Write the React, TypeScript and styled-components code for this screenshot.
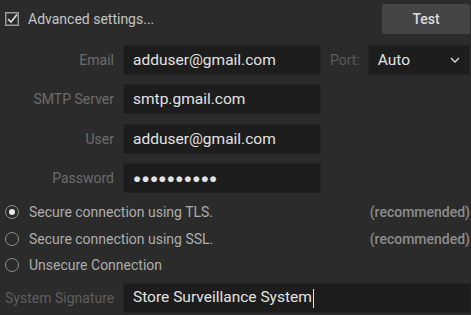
import styled, { createGlobalStyle } from 'styled-components';

const GlobalStyle = createGlobalStyle`
	html, body {
		margin: 0;
		padding: 0;
		background: #2b2b2b;
	}
	body {
		font-family: Roboto, 'Liberation Sans', sans-serif;
		overflow: hidden;
	}
`;

const Page = styled.div`
	width: 471px;
	height: 315px;
	background: #2b2b2b;
	box-sizing: border-box;
	padding: 4px 1px 0 5px;
	display: flex;
	flex-direction: column;
`;

const TopBar = styled.div`
	display: flex;
	align-items: center;
	justify-content: space-between;
	height: 30px;
`;

const CheckLabel = styled.label`
	display: flex;
	align-items: center;
	gap: 9px;
	color: #c4c4c4;
	font-size: 14px;
`;

const TestButton = styled.button`
	width: 88px;
	height: 30px;
	background: #454545;
	border: none;
	border-radius: 2px;
	color: #dcdcdc;
	font-family: inherit;
	font-size: 14px;
	font-weight: 500;
`;

const FormRows = styled.div`
	display: flex;
	flex-direction: column;
	gap: 9.5px;
	margin-top: 10.5px;
`;

const Row = styled.div`
	display: flex;
	align-items: center;
	height: 30px;
`;

const Label = styled.span<{ $dim?: boolean }>`
	width: 109px;
	text-align: right;
	color: ${(p) => (p.$dim ? '#5e5e5e' : '#6c6c6c')};
	font-size: 14px;
	padding-right: 9px;
	flex-shrink: 0;
	white-space: nowrap;
`;

const Field = styled.div<{ $width?: number; $grow?: boolean }>`
	width: ${(p) => (p.$width ? `${p.$width}px` : 'auto')};
	flex: ${(p) => (p.$grow ? 1 : 'none')};
	height: 30px;
	box-sizing: border-box;
	background: #1d1d1d;
	border-radius: 2px;
	box-shadow: inset 0 0 0 1px #242424;
	display: flex;
	align-items: center;
	justify-content: space-between;
	padding: 0 10px;
	color: #e2e2e2;
	font-size: 15.5px;
`;

const PortLabel = styled.span`
	color: #5c5c5c;
	font-size: 14px;
	margin: 0 8px 0 9px;
`;

const Dots = styled.span`
	letter-spacing: 0.3px;
	font-size: 13.5px;
`;

const Caret = styled.span`
	width: 1px;
	height: 19px;
	background: #e2e2e2;
	display: inline-block;
	vertical-align: middle;
	margin-left: 1px;
`;

const RadioList = styled.div`
	display: flex;
	flex-direction: column;
	margin-top: 6px;
`;

const RadioRow = styled.div`
	display: flex;
	align-items: center;
	height: 26.5px;
`;

const RadioCircle = styled.span<{ $checked?: boolean }>`
	width: 14px;
	height: 14px;
	box-sizing: border-box;
	border-radius: 50%;
	border: 1.5px solid #8c8c8c;
	display: flex;
	align-items: center;
	justify-content: center;
	margin-right: 10px;
	flex-shrink: 0;
	&::after {
		content: '';
		width: 6px;
		height: 6px;
		border-radius: 50%;
		background: ${(p) => (p.$checked ? '#e8e8e8' : 'transparent')};
	}
`;

const RadioText = styled.span`
	color: #adadad;
	font-size: 14px;
	flex: 1;
`;

const Hint = styled.span`
	color: #8b8b8b;
	font-size: 14px;
	font-weight: 500;
`;

const SignatureRow = styled.div`
	display: flex;
	align-items: center;
	height: 31px;
	margin-top: 4px;
	margin-right: -1px;
`;

function CheckIcon() {
	return (
		<svg width="14" height="14" viewBox="0 0 14 14">
			<rect x="0.75" y="0.75" width="12.5" height="12.5" fill="none" stroke="#9a9a9a" strokeWidth="1.5" />
			<path d="M3 7 L6 10 L12 2.5" fill="none" stroke="#e0e0e0" strokeWidth="1.6" />
		</svg>
	);
}

function ChevronIcon() {
	return (
		<svg width="10" height="6" viewBox="0 0 10 6">
			<path d="M1 1 L5 5 L9 1" fill="none" stroke="#d0d0d0" strokeWidth="1.5" />
		</svg>
	);
}

const radios = [
	{ text: 'Secure connection using TLS.', hint: '(recommended)', checked: true },
	{ text: 'Secure connection using SSL.', hint: '(recommended)', checked: false },
	{ text: 'Unsecure Connection', hint: '', checked: false },
];

export default function App() {
	return (
		<>
			<GlobalStyle />
			<Page>
				<TopBar>
					<CheckLabel>
						<CheckIcon />
						Advanced settings...
					</CheckLabel>
					<TestButton>Test</TestButton>
				</TopBar>

				<FormRows>
					<Row>
						<Label>Email</Label>
						<Field $width={198}>adduser@gmail.com</Field>
						<PortLabel>Port:</PortLabel>
						<Field $grow>
							Auto
							<ChevronIcon />
						</Field>
					</Row>
					<Row>
						<Label>SMTP Server</Label>
						<Field $width={198}>smtp.gmail.com</Field>
					</Row>
					<Row>
						<Label>User</Label>
						<Field $width={198}>adduser@gmail.com</Field>
					</Row>
					<Row>
						<Label>Password</Label>
						<Field $width={198}>
							<Dots>●●●●●●●●●●</Dots>
						</Field>
					</Row>
				</FormRows>

				<RadioList>
					{radios.map((r) => (
						<RadioRow key={r.text}>
							<RadioCircle $checked={r.checked} />
							<RadioText>{r.text}</RadioText>
							{r.hint && <Hint>{r.hint}</Hint>}
						</RadioRow>
					))}
				</RadioList>

				<SignatureRow>
					<Label $dim>System Signature</Label>
					<Field $grow>
						<span>
							Store Surveillance System
							<Caret />
						</span>
					</Field>
				</SignatureRow>
			</Page>
		</>
	);
}
